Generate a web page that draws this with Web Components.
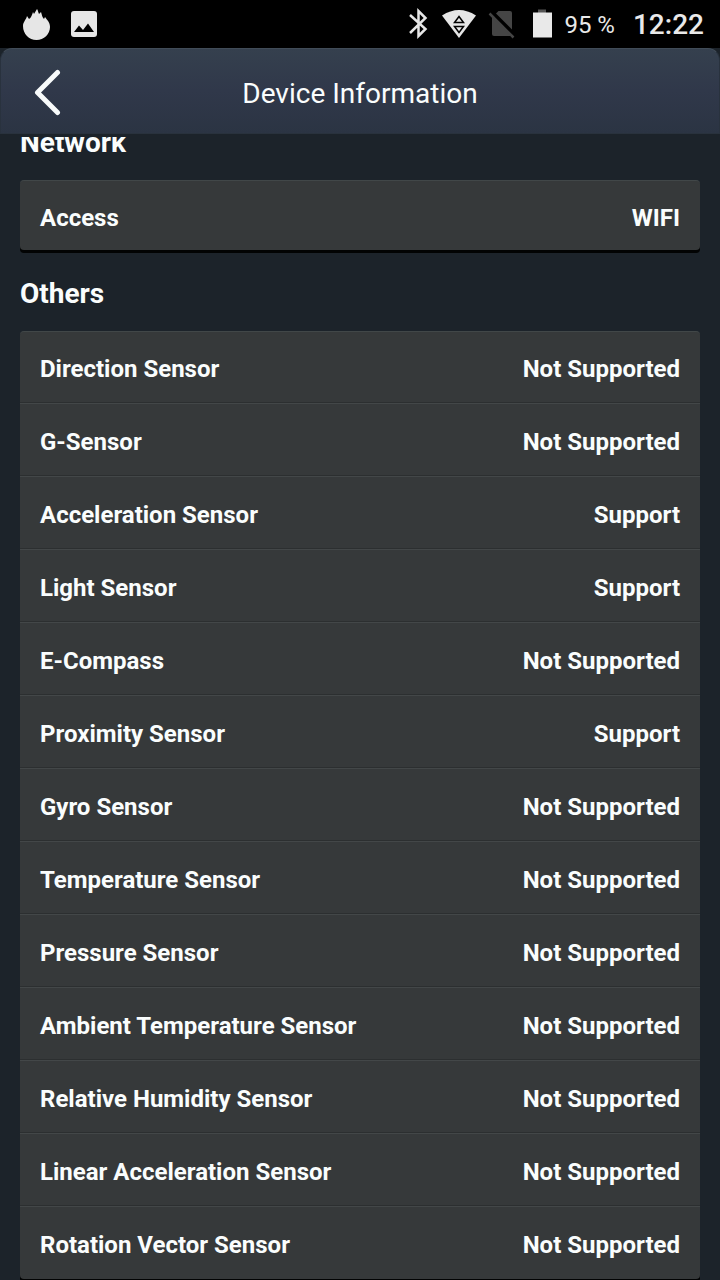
<!DOCTYPE html>
<html lang="en">
<head>
<meta charset="utf-8">
<meta name="viewport" content="width=device-width, initial-scale=1">
<title>Device Information</title>
<style>
  body { margin: 0; background: #1c232a; color: #fafdfd; font-family: Roboto, "Liberation Sans", sans-serif; }
</style>
</head>
<body>
<device-screen>
  <status-bar slot="status" battery="95 %" time="12:22"></status-bar>
  <title-bar slot="title">Device Information</title-bar>
  <info-section heading="Network">
    <info-row label="Access">WIFI</info-row>
  </info-section>
  <info-section heading="Others">
    <info-row label="Direction Sensor">Not Supported</info-row>
    <info-row label="G-Sensor">Not Supported</info-row>
    <info-row label="Acceleration Sensor">Support</info-row>
    <info-row label="Light Sensor">Support</info-row>
    <info-row label="E-Compass">Not Supported</info-row>
    <info-row label="Proximity Sensor">Support</info-row>
    <info-row label="Gyro Sensor">Not Supported</info-row>
    <info-row label="Temperature Sensor">Not Supported</info-row>
    <info-row label="Pressure Sensor">Not Supported</info-row>
    <info-row label="Ambient Temperature Sensor">Not Supported</info-row>
    <info-row label="Relative Humidity Sensor">Not Supported</info-row>
    <info-row label="Linear Acceleration Sensor">Not Supported</info-row>
    <info-row label="Rotation Vector Sensor">Not Supported</info-row>
  </info-section>
</device-screen>

<script>
const define = (name, html, setup) => customElements.define(name, class extends HTMLElement {
  constructor() {
    super();
    this.attachShadow({ mode: "open" }).innerHTML = html;
  }
  connectedCallback() { if (setup) setup(this, this.shadowRoot); }
});

define("info-row", `
  <style>
    :host { display: block; }
    dl { display: flex; justify-content: space-between; align-items: center; gap: 20px;
         margin: 0; padding: 21px 20px 16px; font-size: 24px; line-height: 32px; font-weight: 700; }
    dd { margin: 0; text-align: right; }
  </style>
  <dl><dt></dt><dd><slot></slot></dd></dl>
`, (el, root) => { root.querySelector("dt").textContent = el.getAttribute("label"); });

define("info-section", `
  <style>
    :host { display: block; }
    h2 { margin: 0; padding: 4px 0 0; font-size: 28px; line-height: 74px; font-weight: 700; }
    .card { background: #36393a; border-radius: 4px; border-top: 1px solid #414748;
            box-shadow: 0 3px 0 #020303; margin-bottom: 3px; }
    ::slotted(info-row:not(:first-child)) { border-top: 1px solid #434748; padding-top: 1px; }
    ::slotted(info-row:not(:last-child)) { padding-bottom: 2px; box-shadow: inset 0 -1px 0 #2c2f30; }
    ::slotted(info-row:last-child:not(:first-child)) { padding-bottom: 2px; }
  </style>
  <section><h2></h2><div class="card"><slot></slot></div></section>
`, (el, root) => { root.querySelector("h2").textContent = el.getAttribute("heading"); });

define("title-bar", `
  <style>
    :host { display: block; background: #1c232a; }
    header { display: grid; grid-template-columns: 92px 1fr 92px; align-items: center; height: 86px; box-sizing: border-box;
             background: linear-gradient(#35404e, #30384a 50%, #2b3443); border-radius: 12px 12px 0 0;
             border: 1px solid #29323e; border-top-color: #414c58; border-bottom-color: #29323d; }
    button { display: flex; justify-content: center; align-items: center; height: 84px; padding: 2px 0 0; border: 0;
             background: none; color: inherit; }
    h1 { margin: 0; padding-top: 5px; text-align: center; font-size: 28px; line-height: 40px; font-weight: 400; }
  </style>
  <header>
    <button type="button" aria-label="Back">
      <svg width="30" height="48" viewBox="0 0 30 48" fill="none" stroke="#f8fbfb" stroke-width="5" stroke-linecap="round" stroke-linejoin="round" aria-hidden="true"><path d="M25.500 4.500 5.500 24.500 25.500 44.500"/></svg>
    </button>
    <h1><slot></slot></h1>
  </header>
`);

define("status-bar", `
  <style>
    :host { display: block; background: #000; color: #e9e9e9; }
    .bar { display: flex; justify-content: space-between; align-items: center; height: 48px; padding: 0 16px 0 20px; }
    .group { display: flex; align-items: center; }
    .left { gap: 16px; }
    .battery, .time { padding-top: 2px; line-height: 32px; }
    .battery { font-size: 24px; margin: 0 18px 0 5px; }
    .time { font-size: 28px; font-weight: 500; }
    svg { display: block; }
  </style>
  <div class="bar">
    <div class="group left">
      <svg width="32" height="48" viewBox="0 0 32 48" fill="#e6e6e6" aria-hidden="true"><path d="M3 26C3 22 6 20 7 16L9 19C11 18 12 15 13 12L14 14 17 9C18 10 18 12 19 14L21 12C22 15 22 17 24 19L25 17C27 20 30 22 30 27C30 34 24 40 16.500 40S3 34 3 26Z"/></svg>
      <svg width="32" height="48" viewBox="0 0 32 48" aria-hidden="true"><rect x="3" y="11" width="26" height="26" rx="3" fill="#e6e6e6"/><path d="m6 32 5-6.500 4 4.500 5-6.500 6 8.500Z" fill="#000"/></svg>
    </div>
    <div class="group">
      <svg width="160" height="48" viewBox="400 0 160 48" role="img" aria-label="Bluetooth, Wi-Fi, no SIM, battery">
        <path d="m411 15 15.500 14-7 7V11l7 7L411 33" fill="none" stroke="#e6e6e6" stroke-width="2.500"/>
        <path d="M443 15.500Q460 4.500 477 15.500L460 38Z" fill="#e6e6e6"/>
        <path d="m460 16.500 4.500 6h-9Zm0 16 4.500-6h-9Z" fill="#e6e6e6" stroke="#000" stroke-width="1.500"/>
        <path d="M493 17.500 499.500 11H511q2 0 2 2V34q0 2-2 2H495q-2 0-2-2Z" fill="#454545"/>
        <path d="m492 12 23 23" stroke="#000" stroke-width="5"/>
        <path d="m490.500 13.500 24 24" stroke="#454545" stroke-width="2.500"/>
        <path d="M539 9.500h8v4h-8Z" fill="#555"/><path d="M534 12.500h19v25h-19Z" fill="#e9e9e9"/>
      </svg>
      <span class="battery"></span>
      <span class="time"></span>
    </div>
  </div>
`, (el, root) => {
  for (const part of ["battery", "time"]) root.querySelector("." + part).textContent = el.getAttribute(part);
});

define("device-screen", `
  <style>
    :host { display: flex; flex-direction: column; height: 100vh; background: #1c232a; }
    .bars { padding-bottom: 3px; }
    main { flex: 1; min-height: 0; overflow-y: auto; scrollbar-width: none; padding: 0 20px; }
    main::after { content: ""; display: block; height: 40px; }
  </style>
  <div class="bars"><slot name="status"></slot><slot name="title"></slot></div>
  <main><slot></slot></main>
`);

/* The list opens with its first heading partly under the title bar. */
document.querySelector("device-screen").shadowRoot.querySelector("main").scrollTop = 35;
</script>
</body>
</html>
